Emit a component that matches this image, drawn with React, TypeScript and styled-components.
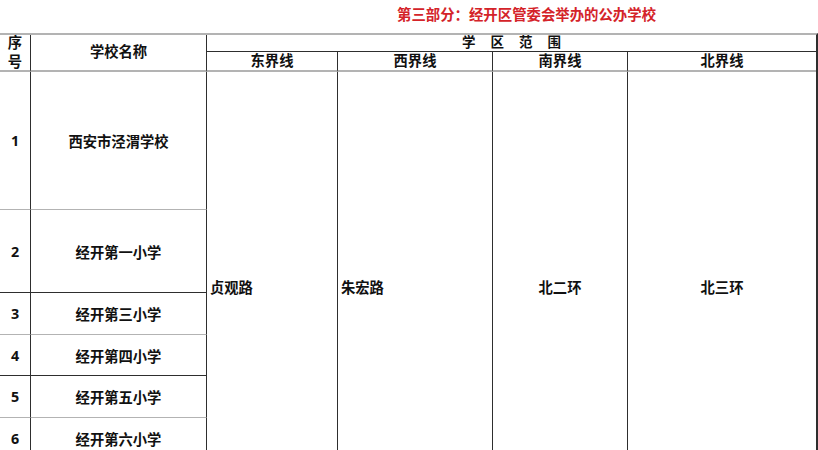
import {FC} from 'react'
import styled, {createGlobalStyle} from 'styled-components'

const GREY = '#b3b3b3'
const DARK = '#2e2e2e'

const GlobalStyle = createGlobalStyle`
  html, body {
    margin: 0;
    padding: 0;
    background: #fff;
    overflow: hidden;
  }
  body {
    font-family: "Open Sans", "Noto Sans CJK SC", sans-serif;
    font-weight: 700;
    color: #111;
  }
`

interface School {
  no: string
  name: string
  height: number
  line: 'grey' | 'dark'
}

const schools: School[] = [
  {no: '1', name: '西安市泾渭学校', height: 138, line: 'grey'},
  {no: '2', name: '经开第一小学', height: 83, line: 'dark'},
  {no: '3', name: '经开第三小学', height: 42, line: 'grey'},
  {no: '4', name: '经开第四小学', height: 41, line: 'dark'},
  {no: '5', name: '经开第五小学', height: 42, line: 'grey'},
  {no: '6', name: '经开第六小学', height: 41, line: 'grey'},
  {no: '', name: '', height: 41, line: 'grey'},
]

const bounds = [
  {text: '贞观路', align: 'left'},
  {text: '朱宏路', align: 'left'},
  {text: '北二环', align: 'center'},
  {text: '北三环', align: 'center'},
] as const

const App: FC = () => (
  <Page>
    <GlobalStyle />
    <Title>第三部分：经开区管委会举办的公办学校</Title>
    <Sheet $rows={schools.map(s => s.height)}>
      <HeadCell $col="1" $row="1 / span 2" $line={GREY} $wide={2}>
        <Stack>
          序<br />号
        </Stack>
      </HeadCell>
      <HeadCell $col="2" $row="1 / span 2" $line={GREY} $wide={2}>
        学校名称
      </HeadCell>
      <HeadCell $col="3 / span 4" $row="1" $line={DARK} $wide={1} $last>
        <Spaced>学区范围</Spaced>
      </HeadCell>
      <HeadCell $col="3" $row="2" $line={GREY} $wide={2}>东界线</HeadCell>
      <HeadCell $col="4" $row="2" $line={GREY} $wide={2}>西界线</HeadCell>
      <HeadCell $col="5" $row="2" $line={GREY} $wide={2}>南界线</HeadCell>
      <HeadCell $col="6" $row="2" $line={GREY} $wide={2} $last>北界线</HeadCell>

      {schools.map((s, i) => (
        <Row key={i} $row={i + 3} $line={s.line === 'grey' ? GREY : DARK}>
          <Cell $col="1">{s.no}</Cell>
          <Cell $col="2">{s.name}</Cell>
        </Row>
      ))}

      {bounds.map((b, i) => (
        <Bound
          key={b.text}
          $col={i + 3}
          $align={b.align}
          $last={i === bounds.length - 1}
        >
          {b.text}
        </Bound>
      ))}
    </Sheet>
  </Page>
)

const Page = styled.div`
  width: 818px;
  height: 450px;
  overflow: hidden;
`
const Title = styled.div`
  height: 33px;
  padding-left: 397px;
  box-sizing: border-box;
  color: #d42329;
  font-size: 14.4px;
  line-height: 30px;
  white-space: nowrap;
`
const Sheet = styled.div<{$rows: number[]}>`
  display: grid;
  grid-template-columns: 31px 176px 131px 155px 135px 188px;
  grid-template-rows: 17px 20px ${p => p.$rows.map(h => `${h}px`).join(' ')};
  width: 816px;
  border-top: 2px solid ${GREY};
  border-right: 2px solid ${DARK};
  font-size: 14.3px;
`
const HeadCell = styled.div<{
  $col: string
  $row: string
  $line: string
  $wide: number
  $last?: boolean
}>`
  grid-column: ${p => p.$col};
  grid-row: ${p => p.$row};
  display: flex;
  align-items: center;
  justify-content: center;
  box-sizing: border-box;
  border-bottom: ${p => p.$wide}px solid ${p => p.$line};
  border-right: ${p => (p.$last ? 'none' : `1px solid ${DARK}`)};
  line-height: 1;
  white-space: nowrap;
`
const Stack = styled.div`
  line-height: 19px;
  text-align: center;
  margin-top: -1px;
`
const Spaced = styled.span`
  letter-spacing: 15px;
  padding-left: 15px;
  font-size: 13.5px;
`
/* the two first columns of one school: its line runs under both */
const Row = styled.div<{$row: number; $line: string}>`
  display: contents;

  > div {
    grid-row: ${p => p.$row};
    border-bottom: 1.5px solid ${p => p.$line};
  }
`
const Cell = styled.div<{$col: string}>`
  grid-column: ${p => p.$col};
  display: flex;
  align-items: center;
  justify-content: center;
  box-sizing: border-box;
  border-right: 1px solid ${DARK};
  white-space: nowrap;
`
const Bound = styled.div<{$col: number; $align: 'left' | 'center'; $last: boolean}>`
  grid-column: ${p => p.$col};
  grid-row: 3 / -1;
  display: flex;
  align-items: center;
  justify-content: ${p => (p.$align === 'left' ? 'flex-start' : 'center')};
  padding-left: ${p => (p.$align === 'left' ? '3px' : '0')};
  box-sizing: border-box;
  border-right: ${p => (p.$last ? 'none' : `1px solid ${DARK}`)};
  white-space: nowrap;
`

export default App
